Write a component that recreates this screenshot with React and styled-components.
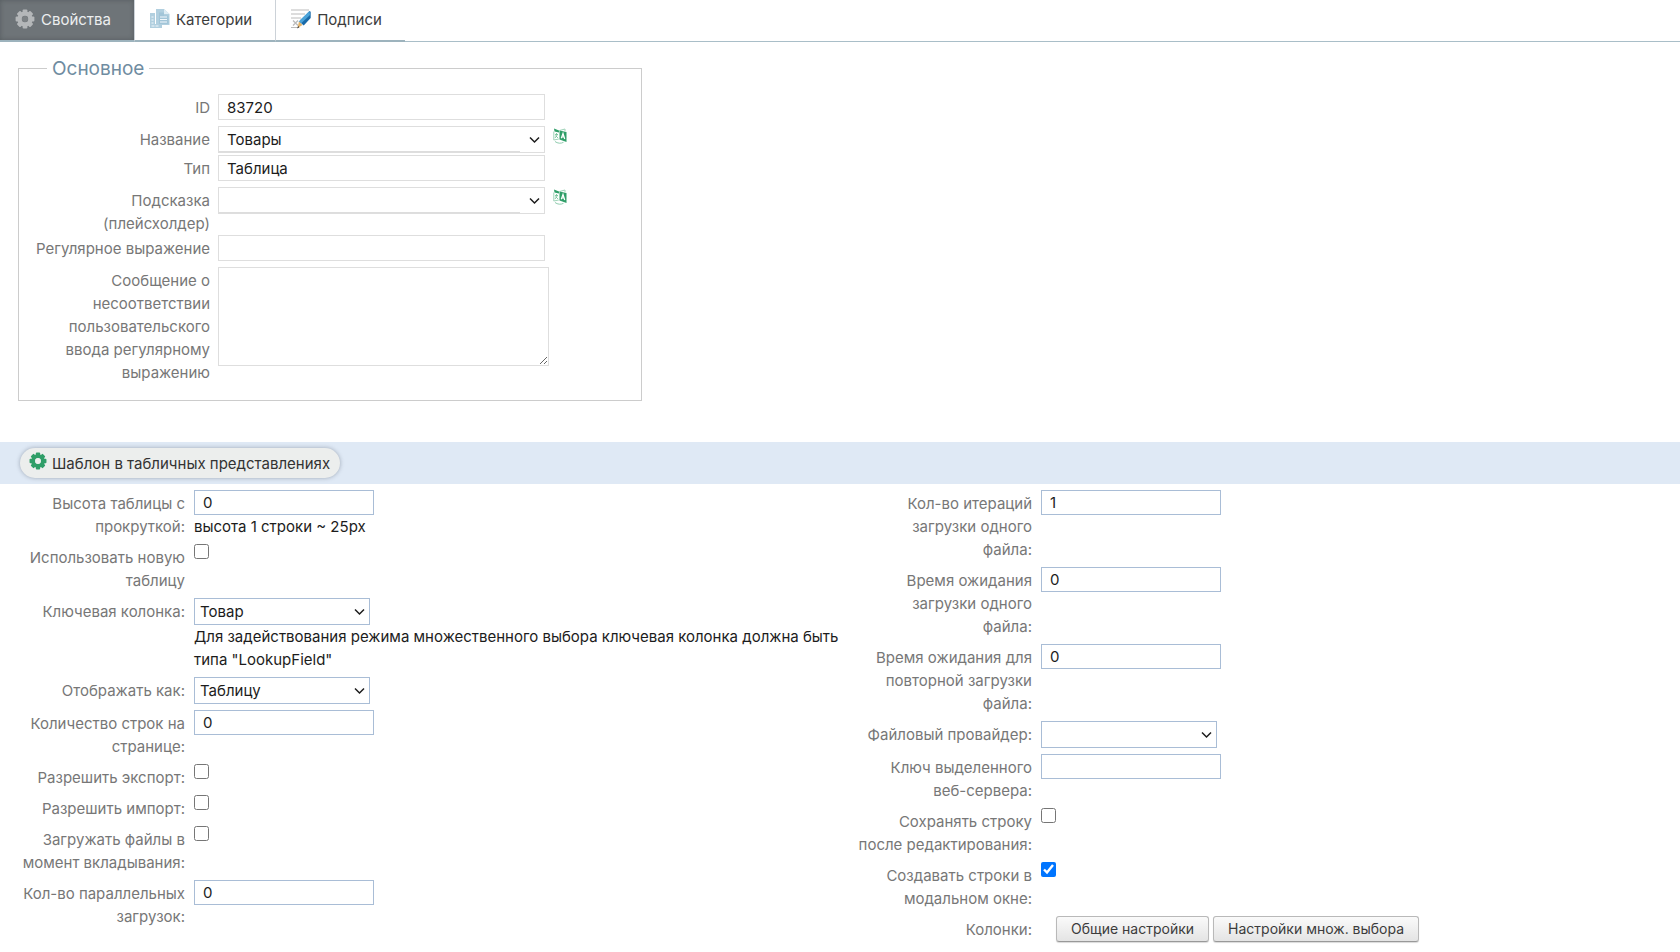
import React from "react";
import styled, { createGlobalStyle, css } from "styled-components";

const GlobalStyle = createGlobalStyle`
  *, *::before, *::after { box-sizing: border-box; }
  body {
    margin: 0;
    background: #fff;
    color: #1c1c1c;
    font: 15px/23px Inter, "Liberation Sans", sans-serif;
  }
  input, select, textarea, button { font: inherit; color: inherit; }
`;

const TabBar = styled.nav`
  display: flex;
  height: 42px;
  border-bottom: 1px solid #a9bec8;
`;

const Tab = styled.button`
  display: flex;
  align-items: center;
  gap: 6px;
  height: 42px;
  padding: 0 23px 2px 15px;
  border: 0;
  border-left: 1px solid #ccd2d8;
  border-bottom: 2px solid #9db3bd;
  background: #fff;
  color: #3c3c3c;
  &:first-child { border-left: 0; }
  ${(p) => p.$active && css`
    background: #6e7478;
    color: #eceeef;
    box-shadow: inset 0 0 5px #565c60;
  `}
`;

const Group = styled.fieldset`
  width: 624px;
  max-width: calc(100% - 36px);
  margin: 13px 18px 0;
  padding: 13px 0 16px 16px;
  border: 1px solid #ccc;
`;

const Legend = styled.legend`
  margin-left: 12px;
  padding: 2px 5px 0;
  font-size: 19px;
  line-height: 24px;
  color: #6f8ca1;
`;

const GroupRow = styled.div`
  display: grid;
  grid-template-columns: 175px minmax(0, 1fr);
  column-gap: 8px;
  align-items: start;
`;

const Label = styled.label`
  padding-top: 2px;
  text-align: right;
  white-space: pre-line;
  color: #777;
`;

const Field = styled.div`
  display: flex;
  align-items: flex-start;
  gap: 8px;
`;

const controlBox = css`
  display: block;
  border: 1px solid ${(p) => (p.$soft ? "#dedede" : "#a9bdd6")};
  border-radius: 0;
  background: #fff;
  outline: 0;
`;

const Input = styled.input`
  ${controlBox}
  width: ${(p) => (p.$soft ? 327 : 180)}px;
  height: ${(p) => (p.$soft ? 26 : 25)}px;
  margin: 0 0 ${(p) => (p.$soft ? 6 : 0)}px;
  padding: 0 8px;
`;

const SelectBox = styled.div`
  position: relative;
  width: ${(p) => (p.$soft ? 327 : 176)}px;
  margin-bottom: ${(p) => (p.$soft ? 2 : 0)}px;
`;

const SelectControl = styled.select`
  ${controlBox}
  width: 100%;
  height: 27px;
  padding: 0 24px 0 ${(p) => (p.$soft ? 8 : 5)}px;
  appearance: none;
  ${(p) => p.$soft && css`
    background: linear-gradient(#ddd, #ddd) left bottom / calc(100% - 24px) 1px no-repeat #fff;
  `}
`;

const Chevron = styled.svg`
  position: absolute;
  top: 10px;
  right: 5px;
  pointer-events: none;
`;

const TextArea = styled.textarea`
  ${controlBox}
  width: 331px;
  height: 99px;
  resize: both;
`;

const IconButton = styled.button`
  display: flex;
  margin: 2px 0 0;
  padding: 0;
  border: 0;
  background: none;
`;

const SectionBar = styled.div`
  display: flex;
  align-items: center;
  height: 42px;
  margin-top: 41px;
  padding: 0 20px;
  background: #dfe9f5;
`;

const PillButton = styled.button`
  display: flex;
  align-items: center;
  gap: 5px;
  height: 30px;
  padding: 0 10px 0 9px;
  border: 0;
  border-radius: 15px;
  background: #eceeed;
  color: #333;
  box-shadow: 0 0 4px rgba(60, 70, 90, 0.4);
  svg { margin-bottom: 5px; }
`;

const Columns = styled.div`
  display: grid;
  grid-template-columns: calc(50% + 7px) minmax(0, 1fr);
  padding-top: 6px;
`;

const Row = styled.div`
  display: grid;
  grid-template-columns: 185px minmax(0, 1fr);
  column-gap: 9px;
  align-items: start;
  padding-bottom: 6px;
  ${Label} { padding-left: 9px; }
`;

const Hint = styled.div``;

const Checkbox = styled.input`
  display: block;
  width: 15px;
  height: 15px;
  margin: 0;
`;

const Actions = styled.div`
  display: flex;
  gap: 4px;
  padding-left: 15px;
`;

const ActionButton = styled.button`
  height: 26px;
  padding: 0 14px;
  border: 1px solid #b9b9b9;
  border-bottom-color: #999;
  border-radius: 3px;
  background: linear-gradient(#fafafa, #e4e4e4);
  box-shadow: 0 1px 1px rgba(0, 0, 0, 0.15);
  color: #3c3c3c;
  font-size: 14px;
  line-height: 22px;
`;

const teeth = [0, 45, 90, 135, 180, 225, 270, 315];

function Gear({ size, color, hole }) {
  return (
    <svg width={size} height={size} viewBox="0 0 20 20" aria-hidden="true">
      <g fill={color}>
        {teeth.map((a) => (
          <rect key={a} x="7.600" y="0.600" width="4.800" height="5" rx="1" transform={`rotate(${a} 10 10)`} />
        ))}
      </g>
      <circle cx="10" cy="10" r="5.400" fill="none" stroke={color} strokeWidth="4.400" />
      <circle cx="10" cy="10" r="3" fill={hole} />
    </svg>
  );
}

function PagesIcon() {
  return (
    <svg width="20" height="20" viewBox="0 0 20 20" aria-hidden="true">
      <path d="M0 4h5v11h7v4H0z" fill="#b1cfdf" />
      <path d="M1.500 8h2M1.500 11h2M1.500 14h2M1.500 17h7" stroke="#f2f8fb" strokeWidth="1.200" strokeDasharray="3 1" />
      <path d="M6 0h8l5.500 5v11H6z" fill="#b1cfdf" />
      <path d="M9 3.500h5v3h4.500V15H9z" fill="#a2c5d8" />
      <path d="M14 0v5h5.500z" fill="#e0edf4" />
      <path d="M10 8h7M10 10.500h7M10 13h7" stroke="#f2f8fb" strokeWidth="1.200" />
    </svg>
  );
}

function PenIcon() {
  return (
    <svg width="20" height="20" viewBox="0 0 20 20" aria-hidden="true">
      <path d="M0 1h18M0 5h14M0 9h10M0 18.500h8" stroke="#bbb" strokeWidth="1.200" />
      <path d="M2 11.500l5 5M7 11.500l-5 5" stroke="#bbb" strokeWidth="1.300" />
      <path d="M18.500 2l1.200.8v6.200l-7 7.500-4-3.500z" fill="#1a6aa8" />
      <path d="M18.500 2L9.500 10.500 7.500 13l3 1 8.500-8z" fill="#4ba3d8" />
      <path d="M8 12.500l3.500 3.500-2.500 1.500-2.500 1.500z" fill="#e3b268" />
      <path d="M7.200 17l1.300 1.300L6 19.500z" fill="#444" />
    </svg>
  );
}

function TranslateIcon() {
  return (
    <svg width="14" height="16" viewBox="0 0 14 16" aria-hidden="true">
      <path d="M1 .5l5 2v2L1.500 3.500z" fill="#2f9e68" />
      <path d="M.8 3.500v8.500l5-1M6.500 2.500L12 1v2" fill="none" stroke="#9fd3b8" />
      <path d="M6.500 2.500l7 1.500v10l-7-2.500z" fill="#2f9e68" />
      <path d="M8.300 10.300L10 5.500l1.700 5.500M8.900 9h2.300" fill="none" stroke="#fff" strokeWidth="1.200" />
      <path d="M2 6.500h3M3.500 5v1.500M4.500 6.500L2 10M2.500 7.500l2.500 2.500" fill="none" stroke="#6dbb92" strokeWidth="0.800" />
      <path d="M2 13.500c2.500 2 6 2.200 8.500.8" fill="none" stroke="#8fcbae" />
    </svg>
  );
}

function Select({ id, options, soft }) {
  return (
    <SelectBox $soft={soft}>
      <SelectControl id={id} $soft={soft}>
        {options.map((o) => <option key={o}>{o}</option>)}
      </SelectControl>
      <Chevron width="11" height="8" viewBox="0 0 11 8" aria-hidden="true">
        <path d="M1 1.500l4.500 4.500L10 1.500" fill="none" stroke="#1c1c1c" strokeWidth="1.500" />
      </Chevron>
    </SelectBox>
  );
}

function GroupField({ id, label, children }) {
  return (
    <GroupRow>
      <Label htmlFor={id}>{label}</Label>
      <Field>{children}</Field>
    </GroupRow>
  );
}

function Setting({ id, label, type = "text", value = "", options, hint }) {
  return (
    <Row>
      <Label htmlFor={id}>{label}</Label>
      <div>
        {type === "text" && <Input id={id} defaultValue={value} />}
        {type === "check" && <Checkbox id={id} type="checkbox" defaultChecked={Boolean(value)} />}
        {type === "select" && <Select id={id} options={options} />}
        {hint && <Hint>{hint}</Hint>}
      </div>
    </Row>
  );
}

const leftSettings = [
  { id: "height", label: "Высота таблицы с прокруткой:", value: "0", hint: "высота 1 строки ~ 25px" },
  { id: "newTable", label: "Использовать новую таблицу", type: "check" },
  {
    id: "keyColumn", label: "Ключевая колонка:", type: "select", options: ["Товар"],
    hint: 'Для задействования режима множественного выбора ключевая колонка должна быть типа "LookupField"',
  },
  { id: "display", label: "Отображать как:", type: "select", options: ["Таблицу"] },
  { id: "pageRows", label: "Количество строк на странице:", value: "0" },
  { id: "export", label: "Разрешить экспорт:", type: "check" },
  { id: "import", label: "Разрешить импорт:", type: "check" },
  { id: "upload", label: "Загружать файлы в момент вкладывания:", type: "check" },
  { id: "parallel", label: "Кол-во параллельных загрузок:", value: "0" },
];

const rightSettings = [
  { id: "iterations", label: "Кол-во итераций загрузки одного\nфайла:", value: "1" },
  { id: "wait", label: "Время ожидания загрузки одного\nфайла:", value: "0" },
  { id: "retryWait", label: "Время ожидания для повторной загрузки файла:", value: "0" },
  { id: "provider", label: "Файловый провайдер:", type: "select", options: [""] },
  { id: "serverKey", label: "Ключ выделенного веб-сервера:" },
  { id: "saveRow", label: "Сохранять строку после редактирования:", type: "check" },
  { id: "modal", label: "Создавать строки в модальном окне:", type: "check", value: true },
];

export default function App() {
  return (
    <>
      <GlobalStyle />
      <TabBar>
        <Tab type="button" $active><Gear size={20} color="#b4b7b9" hole="#7d8285" />Свойства</Tab>
        <Tab type="button"><PagesIcon />Категории</Tab>
        <Tab type="button"><PenIcon />Подписи</Tab>
      </TabBar>
      <main>
        <Group>
          <Legend>Основное</Legend>
          <GroupField id="fieldId" label="ID"><Input id="fieldId" $soft defaultValue="83720" /></GroupField>
          <GroupField id="name" label="Название">
            <Select id="name" soft options={["Товары"]} />
            <IconButton type="button" aria-label="Перевод"><TranslateIcon /></IconButton>
          </GroupField>
          <GroupField id="type" label="Тип"><Input id="type" $soft defaultValue="Таблица" /></GroupField>
          <GroupField id="placeholder" label="Подсказка (плейсхолдер)">
            <Select id="placeholder" soft options={[""]} />
            <IconButton type="button" aria-label="Перевод"><TranslateIcon /></IconButton>
          </GroupField>
          <GroupField id="regex" label="Регулярное выражение"><Input id="regex" $soft /></GroupField>
          <GroupField id="message" label="Сообщение о несоответствии пользовательского ввода регулярному выражению">
            <TextArea id="message" $soft />
          </GroupField>
        </Group>
        <SectionBar>
          <PillButton type="button"><Gear size={18} color="#2f9e68" hole="#eceeed" />Шаблон в табличных представлениях</PillButton>
        </SectionBar>
        <Columns>
          <div>{leftSettings.map((s) => <Setting key={s.id} {...s} />)}</div>
          <div>
            {rightSettings.map((s) => <Setting key={s.id} {...s} />)}
            <Row>
              <Label as="span">Колонки:</Label>
              <Actions>
                <ActionButton type="button">Общие настройки</ActionButton>
                <ActionButton type="button">Настройки множ. выбора</ActionButton>
              </Actions>
            </Row>
          </div>
        </Columns>
      </main>
    </>
  );
}
